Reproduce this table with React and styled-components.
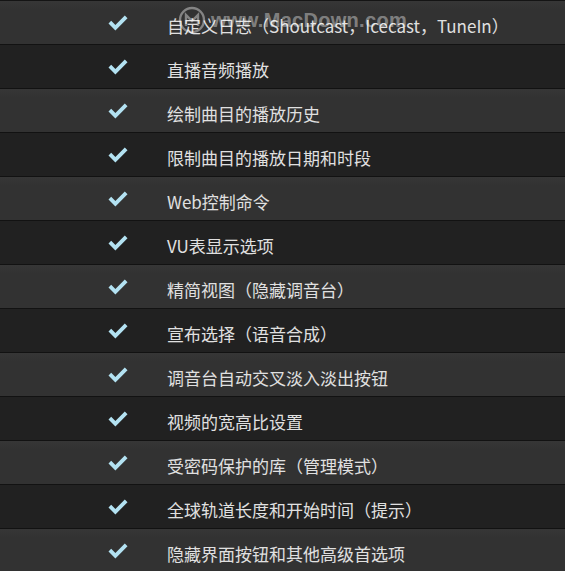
import React from 'react';
import styled, {createGlobalStyle} from 'styled-components';

const items = [
  '自定义日志（Shoutcast，Icecast，TuneIn）',
  '直播音频播放',
  '绘制曲目的播放历史',
  '限制曲目的播放日期和时段',
  'Web控制命令',
  'VU表显示选项',
  '精简视图（隐藏调音台）',
  '宣布选择（语音合成）',
  '调音台自动交叉淡入淡出按钮',
  '视频的宽高比设置',
  '受密码保护的库（管理模式）',
  '全球轨道长度和开始时间（提示）',
  '隐藏界面按钮和其他高级首选项',
];

export default function App() {
  return (
    <>
      <GlobalStyle />
      <Page>
        <List>
          {items.map((text, i) => (
            <Row key={i} $alt={i % 2 === 1}>
              <Check viewBox="0 0 22 18">
                <path d="M1.5 9.5 L4.2 6.8 L8.4 11 L17.8 1.6 L20.5 4.3 L8.4 16.4 Z" />
              </Check>
              <Label>{text}</Label>
            </Row>
          ))}
        </List>
        <Watermark>
          <Logo viewBox="0 0 28 28">
            <circle cx="14" cy="14" r="12" fill="none" stroke="currentColor" strokeWidth="2.4" />
            <path d="M8 20 V9 L14 15 L20 9 V20" fill="none" stroke="currentColor" strokeWidth="2.4" />
          </Logo>
          <Site>www.MacDown.com</Site>
        </Watermark>
      </Page>
    </>
  );
}

const GlobalStyle = createGlobalStyle`
  html, body {
    margin: 0;
    padding: 0;
    background: #222;
  }
`;

const Page = styled.div`
  position: relative;
  width: 565px;
  height: 571px;
  overflow: hidden;
  background: #222;
`;

const List = styled.ul`
  list-style: none;
  margin: 0;
  padding: 0;
  border-top: 1px solid #141414;
`;

const Row = styled.li`
  height: 43px;
  border-bottom: 1px solid #121212;
  display: flex;
  align-items: center;
  gap: 38px;
  padding-left: 107px;
  background: ${props => props.$alt
    ? '#212121'
    : 'linear-gradient(#363636, #323232 20%, #323232)'};
`;

const Check = styled.svg`
  width: 22px;
  height: 18px;
  flex: none;
  fill: #b3e2f2;
`;

const Label = styled.span`
  font-family: "Noto Sans CJK SC", "Noto Sans", sans-serif;
  font-size: 17px;
  color: #e0e0e0;
  padding-top: 6px;
  white-space: nowrap;
`;

const Watermark = styled.div`
  position: absolute;
  top: 6px;
  left: 178px;
  display: flex;
  align-items: center;
  gap: 5px;
  color: rgba(255, 255, 255, 0.4);
`;

const Logo = styled.svg`
  width: 28px;
  height: 28px;
`;

const Site = styled.span`
  font-family: "Liberation Sans", Arial, sans-serif;
  font-weight: bold;
  font-size: 20px;
  letter-spacing: 0.3px;
`;
